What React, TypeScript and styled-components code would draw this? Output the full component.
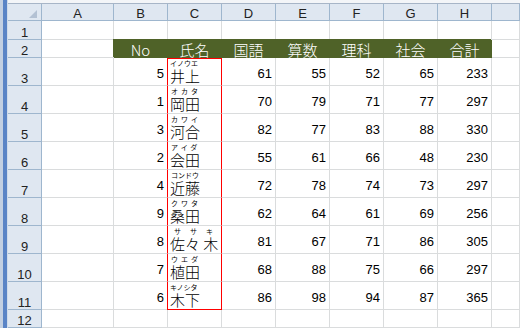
import React from "react";
import styled, { createGlobalStyle } from "styled-components";

type Score = {
  no: number;
  name: string;
  kana: string;
  indent: number;
  spread: number;
  scores: number[];
};

const rows: Score[] = [
  { no: 5, name: "井上", kana: "イノウエ", indent: 0, spread: 0, scores: [61, 55, 52, 65, 233] },
  { no: 1, name: "岡田", kana: "オカタ", indent: 1, spread: 3, scores: [70, 79, 71, 77, 297] },
  { no: 3, name: "河合", kana: "カワイ", indent: 1, spread: 3, scores: [82, 77, 83, 88, 330] },
  { no: 2, name: "会田", kana: "アイダ", indent: 1, spread: 3, scores: [55, 61, 66, 48, 230] },
  { no: 4, name: "近藤", kana: "コンドウ", indent: 1, spread: 0, scores: [72, 78, 74, 73, 297] },
  { no: 9, name: "桑田", kana: "クワタ", indent: 1, spread: 3, scores: [62, 64, 61, 69, 256] },
  { no: 8, name: "佐々 木", kana: "ササキ", indent: 4, spread: 9, scores: [81, 67, 71, 86, 305] },
  { no: 7, name: "植田", kana: "ウエダ", indent: 1, spread: 3, scores: [68, 88, 75, 66, 297] },
  { no: 6, name: "木下", kana: "キノシタ", indent: 0, spread: 0, scores: [86, 98, 94, 87, 365] },
];

const columns = ["A", "B", "C", "D", "E", "F", "G", "H", ""];
const titles = ["No", "氏名", "国語", "算数", "理科", "社会", "合計"];

const GRID = "#dadcdd";
const HEAD_LINE = "#9eb6ce";
const GREEN = "#4f6228";
const RED = "#ff0000";

const GlobalStyle = createGlobalStyle`
  html, body {
    margin: 0;
    padding: 0;
    background: #ffffff;
  }
  body {
    font-family: "Noto Sans CJK JP", "Noto Sans", sans-serif;
    overflow: hidden;
  }
`;

const Window = styled.div`
  display: flex;
  width: 520px;
  height: 328px;
  overflow: hidden;
`;

const Frame = styled.div`
  width: 8px;
  flex: none;
  background: linear-gradient(
    to right,
    #c3d0e2 0 3px,
    #5a84c6 3px 7px,
    #cfdbea 7px 8px
  );
`;

const Main = styled.div`
  flex: 1;
  display: flex;
  flex-direction: column;
`;

const TopEdge = styled.div`
  height: 4px;
  flex: none;
  box-sizing: border-box;
  background: #f3f5f8;
  border-bottom: 1px solid #a7b5c7;
`;

const Sheet = styled.div`
  display: grid;
  grid-template-columns: 34px 72px repeat(7, 54px) 1fr;
  grid-template-rows: 17px 19px 18px repeat(9, 28px) 18px;
`;

const HeaderCell = styled.div`
  box-sizing: border-box;
  display: flex;
  align-items: flex-end;
  justify-content: center;
  background: #dfe7f1;
  border-right: 1px solid ${HEAD_LINE};
  border-bottom: 1px solid ${HEAD_LINE};
  color: #222222;
  font-family: "Liberation Sans", Arial, sans-serif;
  font-size: 13px;
  line-height: 13px;
`;

const Corner = styled(HeaderCell)`
  justify-content: flex-end;
  padding: 0 4px 2px 0;
`;

const Cell = styled.div`
  box-sizing: border-box;
  display: flex;
  align-items: flex-end;
  justify-content: flex-end;
  padding: 0 3px 5px 0;
  border-right: 1px solid ${GRID};
  border-bottom: 1px solid ${GRID};
  color: #000;
  font-family: "Liberation Sans", Arial, sans-serif;
  font-size: 13px;
  line-height: 13px;
`;

const TitleCell = styled.div`
  box-sizing: border-box;
  display: flex;
  align-items: flex-end;
  justify-content: center;
  background: ${GREEN};
  border-right: 1px solid ${GREEN};
  border-bottom: 1px solid ${GREEN};
  box-shadow: -1px -1px 0 0 ${GREEN};
  color: #ffffff;
  font-weight: 300;
  font-size: 15px;
  line-height: 15px;
`;

const NameCell = styled.div<{ $first?: boolean; $last?: boolean }>`
  box-sizing: border-box;
  display: flex;
  flex-direction: column;
  justify-content: flex-end;
  margin-left: -1px;
  padding: 0 0 2px 2px;
  background: #ffffff;
  border-left: 1px solid ${RED};
  border-right: 1px solid ${RED};
  border-top: ${(p) => (p.$first ? `1px solid ${RED}` : "0")};
  border-bottom: 1px solid ${(p) => (p.$last ? RED : GRID)};
`;

const Kana = styled.div<{ $indent: number; $spread: number }>`
  font-size: 7px;
  line-height: 7px;
  height: 7px;
  margin-bottom: 1px;
  padding-left: ${(p) => p.$indent}px;
  letter-spacing: ${(p) => p.$spread}px;
  white-space: nowrap;
  color: #000;
`;

const Kanji = styled.div`
  font-weight: 300;
  font-size: 15px;
  line-height: 15px;
  white-space: pre;
  color: #000;
`;

const Triangle = () => (
  <svg width="8" height="8" viewBox="0 0 8 8">
    <polygon points="8,0 8,8 0,8" fill="#b3c1d3" />
  </svg>
);

export default function App() {
  const blank = (key: string) => <Cell key={key} />;

  return (
    <Window>
      <GlobalStyle />
      <Frame />
      <Main>
        <TopEdge />
        <Sheet>
          <Corner>
            <Triangle />
          </Corner>
          {columns.map((c, i) => (
            <HeaderCell key={`h${i}`}>{c}</HeaderCell>
          ))}

          <HeaderCell>1</HeaderCell>
          {columns.map((_, i) => blank(`r1-${i}`))}

          <HeaderCell>2</HeaderCell>
          {blank("r2-a")}
          {titles.map((t) => (
            <TitleCell key={t}>{t}</TitleCell>
          ))}
          {blank("r2-i")}

          {rows.map((r, idx) => (
            <React.Fragment key={r.no}>
              <HeaderCell>{idx + 3}</HeaderCell>
              {blank(`a${idx}`)}
              <Cell>{r.no}</Cell>
              <NameCell $first={idx === 0} $last={idx === rows.length - 1}>
                <Kana $indent={r.indent} $spread={r.spread}>
                  {r.kana}
                </Kana>
                <Kanji>{r.name}</Kanji>
              </NameCell>
              {r.scores.map((s, j) => (
                <Cell key={j}>{s}</Cell>
              ))}
              {blank(`i${idx}`)}
            </React.Fragment>
          ))}

          <HeaderCell>12</HeaderCell>
          {columns.map((_, i) => blank(`r12-${i}`))}
        </Sheet>
      </Main>
    </Window>
  );
}
